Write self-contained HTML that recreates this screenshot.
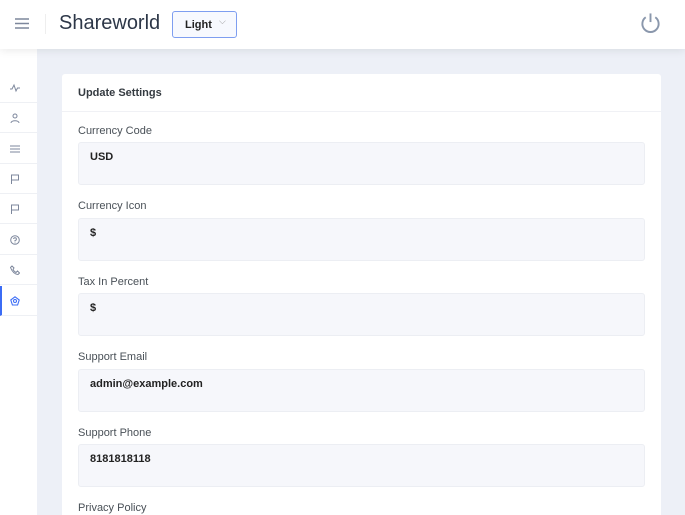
<!DOCTYPE html>
<html><head><meta charset="utf-8"><style>
*{box-sizing:border-box;margin:0;padding:0}
html,body{width:685px;height:515px;overflow:hidden}
body{background:#edf0f7;font-family:"Liberation Sans",sans-serif;position:relative;color:#333}
.hdr{position:absolute;left:0;top:0;width:685px;height:49px;background:#fff;box-shadow:0 2px 8px rgba(0,0,0,.08);z-index:2}
.side{position:absolute;left:0;top:49px;width:37px;height:466px;background:#fff}
.si{position:absolute;left:0;width:37px;height:30px;border-bottom:1px solid #eef0f4}
.si svg{position:absolute;left:10px;top:10px}
.card{position:absolute;left:62px;top:74px;width:599px;height:441px;background:#fff;border-radius:3px 3px 0 0}
.ct{height:38px;border-bottom:1px solid #f0f1f5;padding:13px 16px;font-size:11px;font-weight:bold;color:#343a40}
.lbl{position:absolute;left:16px;font-size:11px;color:#495057}
.ta{position:absolute;left:16px;width:567px;height:43px;background:#f6f7fb;border:1px solid #eceef3;border-radius:3px;padding:8px 11px;font-size:11px;font-weight:bold;color:#222}
</style></head><body>
<div class="hdr">
<svg style="position:absolute;left:14px;top:17px" width="16" height="13" viewBox="0 0 16 13"><path d="M1 2h14M1 6.5h14M1 11h14" stroke="#7d879c" stroke-width="1.6"/></svg>
<div style="position:absolute;left:45px;top:14px;width:1px;height:20px;background:#eee"></div>
<div style="position:absolute;left:59px;top:12px;font-size:20px;color:#2d3748">Shareworld</div>
<div style="position:absolute;left:172px;top:11px;width:65px;height:27px;border:1px solid #7e9ef0;border-radius:3px;background:#f7f9fe;font-size:11px;color:#222;padding:7px 12px;font-weight:bold">Light<span style="position:absolute;left:46px;top:4px;color:#999;font-size:9px;font-weight:normal">⌵</span></div>
<svg style="position:absolute;left:639px;top:12px" width="23" height="23" viewBox="0 0 24 24"><path d="M7 5.5A8.5 8.5 0 1 0 17 5.5" fill="none" stroke="#8a97ac" stroke-width="2"/><path d="M12 1.5v9" stroke="#8a97ac" stroke-width="2"/></svg>
</div>
<div class="side">
<div class="si" style="top:24px"><svg width="10" height="10" viewBox="0 0 10 10"><path d="M0 6h2l2-4 2 6 1.5-3H10" fill="none" stroke="#7d879c"/></svg></div>
<div class="si" style="top:54px"><svg width="10" height="10" viewBox="0 0 10 10"><circle cx="5" cy="3" r="2" fill="none" stroke="#7d879c"/><path d="M1 10c0-3 8-3 8 0" fill="none" stroke="#7d879c"/></svg></div>
<div class="si" style="top:85px"><svg width="10" height="10" viewBox="0 0 10 10"><path d="M0 2h10M0 5h10M0 8h10" stroke="#7d879c"/></svg></div>
<div class="si" style="top:115px"><svg width="10" height="10" viewBox="0 0 10 10"><path d="M1.5 10V1h7v5h-7" fill="none" stroke="#7d879c"/></svg></div>
<div class="si" style="top:145px"><svg width="10" height="10" viewBox="0 0 10 10"><path d="M1.5 10V1h7v5h-7" fill="none" stroke="#7d879c"/></svg></div>
<div class="si" style="top:176px"><svg width="10" height="10" viewBox="0 0 10 10"><circle cx="5" cy="5" r="4.3" fill="none" stroke="#7d879c"/><path d="M3.6 4a1.4 1.4 0 1 1 1.4 1.5V6.5M5 7.5v.8" fill="none" stroke="#7d879c"/></svg></div>
<div class="si" style="top:206px"><svg width="10" height="10" viewBox="0 0 10 10"><path d="M2 1l2 2-1 1.5q1 2 3 3L7.5 6l2 2-1.5 1.5Q3 9 .5 2.5z" fill="none" stroke="#7d879c"/></svg></div>
<div class="si" style="top:237px;border-left:2px solid #3b6cf5"><svg style="left:8px" width="10" height="10" viewBox="0 0 10 10"><path d="M5 .8L9.2 4 7.6 9H2.4L.8 4z" fill="none" stroke="#3b6cf5" stroke-width="1.1"/><circle cx="5" cy="5" r="1.5" fill="none" stroke="#3b6cf5"/></svg></div>
</div>
<div class="card">
<div class="ct">Update Settings</div>
<div class="lbl" style="top:51px">Currency Code</div><div class="ta" style="top:68px">USD</div>
<div class="lbl" style="top:126px">Currency Icon</div><div class="ta" style="top:144px">$</div>
<div class="lbl" style="top:202px">Tax In Percent</div><div class="ta" style="top:219px">$</div>
<div class="lbl" style="top:277px">Support Email</div><div class="ta" style="top:295px">admin@example.com</div>
<div class="lbl" style="top:353px">Support Phone</div><div class="ta" style="top:370px">8181818118</div>
<div class="lbl" style="top:428px">Privacy Policy</div>
</div>
</body></html>
